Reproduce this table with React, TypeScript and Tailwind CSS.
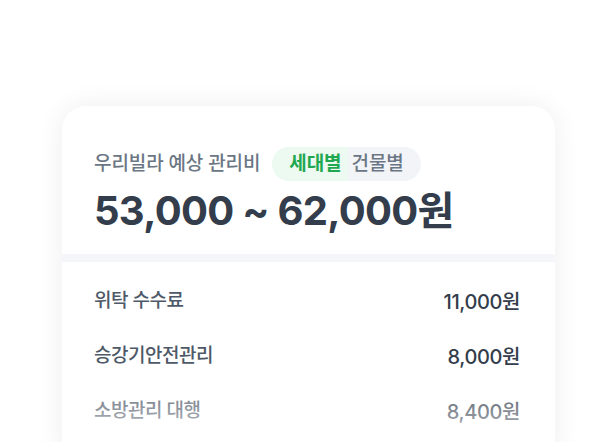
import React from 'react';

const rows = [
  { label: '위탁 수수료', value: '11,000원' },
  { label: '승강기안전관리', value: '8,000원' },
  { label: '소방관리 대행', value: '8,400원' },
];

const App = () => {
  return (
    <div
      className="h-[442px] w-[616px] overflow-hidden bg-white"
      style={{ fontFamily: 'Inter, "Noto Sans CJK KR", sans-serif' }}
    >
      <div className="ml-[62px] mt-[106px] w-[493px] rounded-t-[24px] bg-white shadow-[0_0_28px_rgba(0,20,60,0.07)]">
        <div className="px-8 pt-[41px] pb-[19px]">
          <div className="flex items-center gap-[12px]">
            <span className="text-[19px] font-medium tracking-[-0.1px] text-[#6b7684]">
              우리빌라 예상 관리비
            </span>
            <div className="flex h-[34px] items-center overflow-hidden rounded-full bg-[#f2f4f8] text-[19px] font-medium tracking-[-0.1px]">
              <span className="flex h-full items-center rounded-l-full bg-[#edfaf1] pl-[17px] pr-[6px] font-semibold text-[#1fa850]">
                세대별
              </span>
              <span className="flex h-full items-center pl-[4px] pr-[17px] text-[#6b7684]">
                건물별
              </span>
            </div>
          </div>
          <div className="mt-[6px] text-[40px] font-bold leading-[48px] tracking-[-0.7px] text-[#333d4b]">
            53,000 ~ 62,000원
          </div>
        </div>
        <div className="h-[8px] bg-[#f5f6f9]" />
        <div className="relative flex flex-col px-8 pt-[12px] pb-[20px]">
          {rows.map((row) => (
            <div key={row.label} className="flex h-[55px] items-center justify-between pr-[3px]">
              <span className="text-[19px] font-medium tracking-[-0.5px] text-[#4e5968]">
                {row.label}
              </span>
              <span className="text-[20px] font-medium tracking-[-0.4px] text-[#333d4b]">
                {row.value}
              </span>
            </div>
          ))}
          <div className="pointer-events-none absolute bottom-0 left-0 h-[90px] w-full bg-gradient-to-b from-white/0 to-white/85" />
        </div>
      </div>
    </div>
  );
};

export default App;
